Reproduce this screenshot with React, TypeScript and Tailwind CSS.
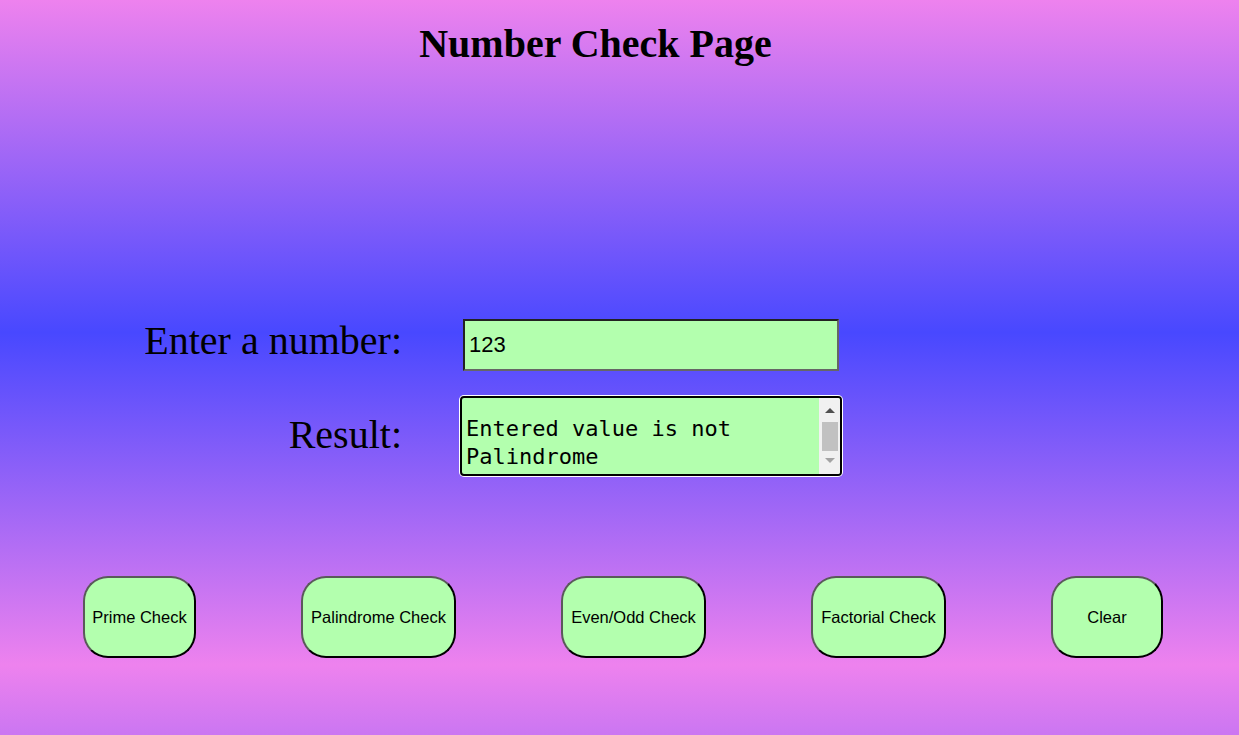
import { useState } from 'react'

const buttons = [
  { label: 'Prime Check', width: 'w-[113px]' },
  { label: 'Palindrome Check', width: 'w-[155px]' },
  { label: 'Even/Odd Check', width: 'w-[145px]' },
  { label: 'Factorial Check', width: 'w-[135px]' },
  { label: 'Clear', width: 'w-[112px]' },
]

export default function App() {
  const [value, setValue] = useState('123')
  const result = 'Entered value is not Palindrome'

  return (
    <div className="min-h-screen w-full bg-[linear-gradient(#ee82ee,#4848ff,#ee82ee)] bg-[length:100%_665px] bg-repeat-y font-['Liberation_Serif',serif] text-black">
      <h1 className="pt-[22px] pr-[48px] text-center text-[40px] font-bold leading-[44px]">Number Check Page</h1>

      <div className="mt-[253px] flex flex-col gap-[25px]">
        <div className="flex items-center">
          <label className="w-[402px] text-right text-[40px] leading-[44px] -mt-[8px]">Enter a number:</label>
          <input
            type="text"
            value={value}
            onChange={(e) => setValue(e.target.value)}
            className="ml-[61px] h-[52px] w-[376px] border-2 border-t-[#222] border-l-[#222] border-r-[#666] border-b-[#666] bg-[#b3ffae] px-[4px] font-['Liberation_Sans',sans-serif] text-[22px] outline-none"
          />
        </div>

        <div className="flex items-center">
          <label className="w-[402px] text-right text-[40px] leading-[44px] -mt-[2px]">Result:</label>
          <div className="relative ml-[58px] h-[80px] w-[382px] overflow-hidden rounded-[4px] border-2 border-black bg-[#b3ffae] ring-1 ring-white">
            <div className="pl-[4px] pr-[24px] pt-[17px] font-['DejaVu_Sans_Mono',monospace] text-[22px] leading-[28px]">
              {result}
            </div>
            <div className="absolute right-0 top-0 bottom-0 flex w-[21px] flex-col items-center bg-[#f1f1f1]">
              <div className="mt-[10px] h-0 w-0 border-x-[5px] border-b-[5px] border-x-transparent border-b-[#505050]" />
              <div className="mt-[9px] h-[29px] w-[16px] bg-[#c1c1c1]" />
              <div className="mt-[7px] h-0 w-0 border-x-[5px] border-t-[5px] border-x-transparent border-t-[#a3a3a3]" />
            </div>
          </div>
        </div>
      </div>

      <div className="mt-[100px] flex gap-[105px] pl-[83px] pb-[20px]">
        {buttons.map((b) => (
          <button
            key={b.label}
            type="button"
            className={`${b.width} h-[82px] rounded-[25px] border-2 border-t-[#5a5a5a] border-l-[#5a5a5a] border-r-black border-b-black bg-[#b3ffae] font-['Liberation_Sans',sans-serif] text-[16.5px]`}
          >
            {b.label}
          </button>
        ))}
      </div>
    </div>
  )
}
